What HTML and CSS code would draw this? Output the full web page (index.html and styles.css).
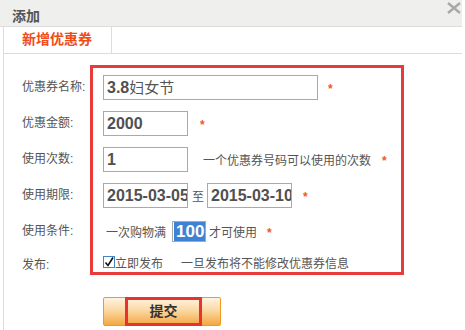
FILE: index.html
```html
<!DOCTYPE html>
<html lang="zh-CN">
<head>
  <meta charset="UTF-8" />
  <meta name="viewport" content="width=device-width, initial-scale=1.0"/>
  <title>添加</title>
  <link rel="stylesheet" href="styles.css">
</head>
<body>

  <div class="dialog">
    <div class="titlebar">
      <span class="title">添加</span>
      <svg class="close" width="14" height="12" viewBox="0 0 14 12">
        <path d="M1 1 L13 11 M13 1 L1 11" stroke="#a9a9a9" stroke-width="2.4" fill="none"/>
      </svg>
    </div>

    <div class="panel">
      <div class="tabs">
        <div class="tab">新增优惠券</div>
      </div>

      <div class="form">
        <div class="labels">
          <div class="label">优惠券名称:</div>
          <div class="label">优惠金额:</div>
          <div class="label">使用次数:</div>
          <div class="label">使用期限:</div>
          <div class="label">使用条件:</div>
          <div class="label last">发布:</div>
        </div>

        <div class="fields">
          <div class="row">
            <div class="field wide"><b>3.8</b>妇女节</div>
            <span class="req r1">*</span>
          </div>
          <div class="row">
            <div class="field"><b>2000</b></div>
            <span class="req r2">*</span>
          </div>
          <div class="row">
            <div class="field"><b>1</b></div>
            <span class="hint h3">一个优惠券号码可以使用的次数</span>
            <span class="req r3">*</span>
          </div>
          <div class="row">
            <div class="field"><b>2015-03-05</b></div>
            <span class="to">至</span>
            <div class="field"><b>2015-03-10</b></div>
            <span class="req r4">*</span>
          </div>
          <div class="row">
            <span class="hint h5">一次购物满</span>
            <div class="field small"><b class="sel">100</b></div>
            <span class="hint h5b">才可使用</span>
            <span class="req r5">*</span>
          </div>
          <div class="row last">
            <svg class="check" width="13" height="13" viewBox="0 0 13 13">
              <rect x="0.5" y="0.5" width="11" height="11" fill="#fff" stroke="#3f86c4"/>
              <path d="M2.5 6.5 L5 9.5 L10 1.5" stroke="#111" stroke-width="1.6" fill="none"/>
            </svg>
            <span class="hint">立即发布</span>
            <span class="hint h6">一旦发布将不能修改优惠券信息</span>
          </div>
        </div>
      </div>

      <div class="actions">
        <button class="submit"><span class="mark">提交</span></button>
      </div>
    </div>
  </div>

</body>
</html>
```

FILE: styles.css
```css
body {
  margin: 0;
  font-family: "Liberation Sans", "Noto Sans CJK SC", sans-serif;
  color: #555;
  background: #fff;
}
.dialog {
  width: 462px;
  height: 330px;
  overflow: hidden;
}
.titlebar {
  position: relative;
  height: 26px;
  background: #efefed;
  border-bottom: 1px solid #dcdcdc;
}
.title {
  display: block;
  padding: 6px 0 0 12px;
  font-size: 14px;
  line-height: 20px;
  font-weight: bold;
  color: #555;
}
.close {
  position: absolute;
  top: 2px;
  right: 1px;
}
.panel {
  margin-left: 3px;
  border-left: 1px solid #dcdcdc;
  height: 303px;
}
.tabs {
  display: flex;
  height: 26px;
  border-bottom: 1px solid #dcdcdc;
}
.tab {
  width: 89px;
  padding-left: 18px;
  border-right: 1px solid #dcdcdc;
  font-size: 14px;
  line-height: 24px;
  font-weight: bold;
  color: #f04c18;
  background: #fff;
}
.form {
  display: flex;
  margin: 11px 0 0 18px;
}
.labels {
  width: 68px;
  padding-top: 4px;
}
.label {
  height: 36px;
  line-height: 36px;
  font-size: 12px;
  color: #555;
}
.label.last {
  height: auto;
  padding-top: 9px;
  line-height: 14px;
}
.fields {
  width: 298px;
  border: 3px solid #e83b3b;
  padding: 1px 0 1px 10px;
}
.row {
  display: flex;
  align-items: center;
  height: 36px;
  font-size: 12px;
}
.row.last {
  height: auto;
  padding-top: 8px;
  line-height: 14px;
}
.field {
  box-sizing: border-box;
  width: 85px;
  height: 25px;
  padding: 0 0 0 3px;
  border: 1px solid #a9a9a9;
  background: #fff;
  font-size: 15px;
  line-height: 23px;
  white-space: nowrap;
  overflow: hidden;
  color: #555;
}
.field b {
  font-size: 16px;
  color: #505050;
}
.field.wide {
  width: 215px;
}
.field.small {
  width: 34px;
  height: 21px;
  line-height: 19px;
  margin-left: 6px;
  padding-left: 1px;
}
.sel {
  font-size: 17px !important;
  background: #3d82d4;
  color: #fff !important;
  padding-left: 2px;
  padding-right: 4px;
}
.req {
  color: #f05a23;
  font-weight: bold;
  font-size: 12px;
  line-height: 12px;
  padding-top: 3px;
}
.r1 { margin-left: 10px; }
.r2 { margin-left: 12px; }
.r3 { margin-left: 11px; }
.r4 { margin-left: 11px; }
.r5 { margin-left: 10px; }
.hint {
  color: #555;
  font-size: 12px;
}
.h3 { margin-left: 15px; }
.h5 { margin-left: 3px; }
.h5b { margin-left: 3px; }
.h6 { margin-left: 18px; }
.to {
  margin: 0 3px 0 4px;
  font-size: 12px;
}
.check {
  margin-right: -1px;
  align-self: flex-start;
  margin-top: -1px;
}
.actions {
  margin: 22px 0 0 99px;
}
.submit {
  display: flex;
  box-sizing: border-box;
  width: 118px;
  height: 29px;
  padding: 0 0 0 21px;
  border: 1px solid #f09a22;
  border-radius: 2px;
  background: linear-gradient(#fef3e0, #fbd9a4 45%, #f4a741);
  font-family: inherit;
  cursor: pointer;
}
.mark {
  box-sizing: border-box;
  width: 77px;
  height: 29px;
  margin-top: -1px;
  border: 3px solid #e83232;
  font-size: 14px;
  font-weight: bold;
  line-height: 23px;
  color: #333;
  text-align: center;
}
```
